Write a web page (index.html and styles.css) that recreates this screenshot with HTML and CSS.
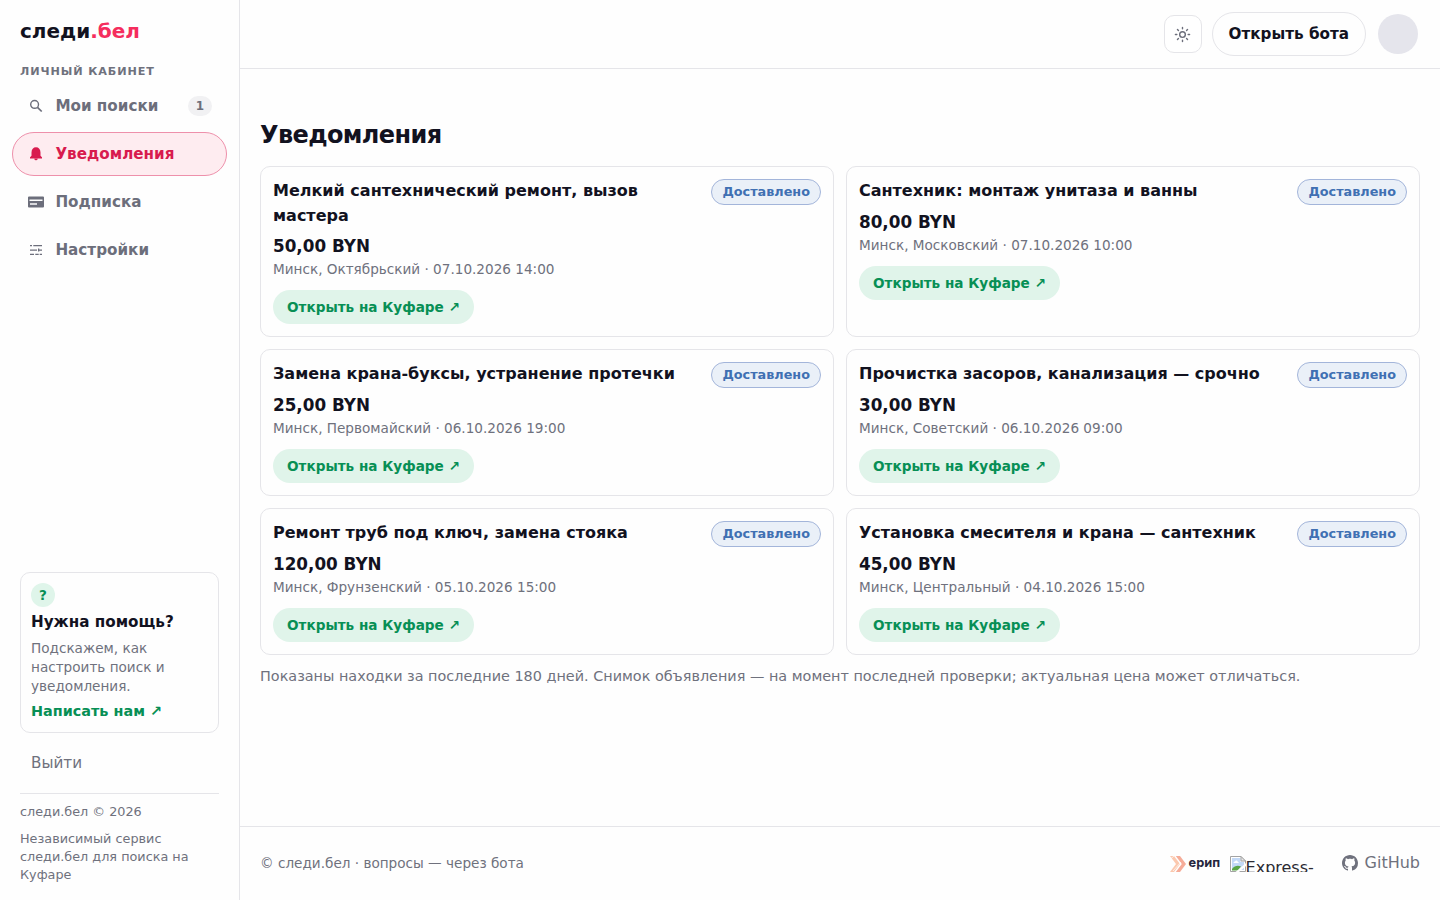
FILE: index.html
```html
<!DOCTYPE html>
<html lang="ru">
<head>
    <meta charset="UTF-8">
    <meta name="viewport" content="width=device-width, initial-scale=1.0">
    <title>Уведомления — следи.бел</title>
    <link rel="stylesheet" href="styles.css">
</head>
<body>
<div class="app">
    <aside class="sidebar">
        <a class="logo">следи<span>.бел</span></a>
        <div class="sidebar-caption">Личный кабинет</div>
        <nav class="nav">
            <a class="nav-item">
                <svg class="nav-icon" viewBox="0 0 16 16" fill="none" stroke="currentColor" stroke-width="1.4"><circle cx="6.600" cy="6.400" r="3.900"/><path stroke-width="1.700" d="M9.500 9.300l4.200 4.200"/></svg>
                <span>Мои поиски</span>
                <span class="nav-count">1</span>
            </a>
            <a class="nav-item active">
                <svg class="nav-icon" viewBox="0 0 16 16" fill="currentColor"><path d="M8 14.300a1.700 1.700 0 0 0 1.700-1.600H6.300A1.700 1.700 0 0 0 8 14.300zM12.500 9.800V6.400C12.500 3.300 10.700 1.300 8 1.300S3.500 3.300 3.500 6.400v3.400L2 11.300v1.200h12v-1.200z"/></svg>
                <span>Уведомления</span>
            </a>
            <a class="nav-item">
                <svg class="nav-icon" viewBox="0 0 16 16" fill="currentColor"><path fill-rule="evenodd" d="M1 2.500h14a1 1 0 0 1 1 1v9a1 1 0 0 1-1 1H1a1 1 0 0 1-1-1v-9a1 1 0 0 1 1-1zM1.500 5.500v1.500h13V5.500zM2 9.300v1.500h7V9.300z"/></svg>
                <span>Подписка</span>
            </a>
            <a class="nav-item">
                <svg class="nav-icon" viewBox="0 0 16 16" fill="currentColor"><path d="M2 3h2v1.300H2zM5.300 3H14v1.300H5.300zM2 7.400h7v1.300H2zM10 6.500h1.300v.9H14v1.300h-2.700v.9H10zM2 11.700h4v1.300H2zM7.300 11.700h3.400v1.300H7.300zM11.700 11.700H14v1.300h-2.300z"/></svg>
                <span>Настройки</span>
            </a>
        </nav>

        <div class="sidebar-bottom">
            <div class="help">
                <span class="help-mark">?</span>
                <div class="help-title">Нужна помощь?</div>
                <p class="help-text">Подскажем, как настроить поиск и уведомления.</p>
                <a class="help-link">Написать нам ↗</a>
            </div>
            <a class="logout">Выйти</a>
            <div class="legal">
                <p>следи.бел © 2026</p>
                <p>Независимый сервис следи.бел для поиска на Куфаре</p>
            </div>
        </div>
    </aside>

    <div class="content">
        <header class="topbar">
            <button class="theme-button" type="button" aria-label="Тема">
                <svg viewBox="0 0 24 24" fill="none" stroke="currentColor" stroke-width="2" stroke-linecap="round"><circle cx="12" cy="12" r="4"/><path d="M12 2v2M12 20v2M4.900 4.900l1.400 1.400M17.700 17.700l1.400 1.400M2 12h2M20 12h2M4.900 19.100l1.400-1.400M17.700 6.300l1.400-1.400"/></svg>
            </button>
            <a class="bot-button">Открыть бота</a>
            <span class="avatar"></span>
        </header>

        <main class="main">
            <h1>Уведомления</h1>
            <div class="cards">
                <article class="card">
                    <div class="card-head"><h2>Мелкий сантехнический ремонт, вызов мастера</h2><span class="badge">Доставлено</span></div>
                    <div class="price">50,00 BYN</div>
                    <div class="meta">Минск, Октябрьский · 07.10.2026 14:00</div>
                    <a class="open-link">Открыть на Куфаре ↗</a>
                </article>
                <article class="card">
                    <div class="card-head"><h2>Сантехник: монтаж унитаза и ванны</h2><span class="badge">Доставлено</span></div>
                    <div class="price">80,00 BYN</div>
                    <div class="meta">Минск, Московский · 07.10.2026 10:00</div>
                    <a class="open-link">Открыть на Куфаре ↗</a>
                </article>
                <article class="card">
                    <div class="card-head"><h2>Замена крана-буксы, устранение протечки</h2><span class="badge">Доставлено</span></div>
                    <div class="price">25,00 BYN</div>
                    <div class="meta">Минск, Первомайский · 06.10.2026 19:00</div>
                    <a class="open-link">Открыть на Куфаре ↗</a>
                </article>
                <article class="card">
                    <div class="card-head"><h2>Прочистка засоров, канализация — срочно</h2><span class="badge">Доставлено</span></div>
                    <div class="price">30,00 BYN</div>
                    <div class="meta">Минск, Советский · 06.10.2026 09:00</div>
                    <a class="open-link">Открыть на Куфаре ↗</a>
                </article>
                <article class="card">
                    <div class="card-head"><h2>Ремонт труб под ключ, замена стояка</h2><span class="badge">Доставлено</span></div>
                    <div class="price">120,00 BYN</div>
                    <div class="meta">Минск, Фрунзенский · 05.10.2026 15:00</div>
                    <a class="open-link">Открыть на Куфаре ↗</a>
                </article>
                <article class="card">
                    <div class="card-head"><h2>Установка смесителя и крана — сантехник</h2><span class="badge">Доставлено</span></div>
                    <div class="price">45,00 BYN</div>
                    <div class="meta">Минск, Центральный · 04.10.2026 15:00</div>
                    <a class="open-link">Открыть на Куфаре ↗</a>
                </article>
            </div>
            <p class="note">Показаны находки за последние 180 дней. Снимок объявления — на момент последней проверки; актуальная цена может отличаться.</p>
        </main>

        <footer class="footer">
            <span class="footer-text">© следи.бел · вопросы — через бота</span>
            <span class="erip">
                <svg viewBox="0 0 17 16"><path fill="#fbc8ae" d="M0 0h4l6 8-6 8H0l6-8z"/><path fill="#f6ac98" d="M5.800 0h4.200l6 8-6 8H5.800l6-8z"/><path stroke="#fefefe" stroke-width=".7" d="M0 3.500 4 0M3 15l8-9"/></svg>
                <span>ерип</span>
            </span>
            <span class="express">
                <svg viewBox="0 0 16 16"><path fill="#fff" stroke="#a3a3a3" d="M.500.500h10.500l4.500 4.500v10.500H.500z"/><path fill="#c3d9f7" d="M2 2h8.500v4H14v8H2z"/><path fill="#fff" d="M3.500 7c0-1.200 1-1.500 1.500-1.500.5-1.300 2.500-1.200 2.700.3 1.200 0 1.200 1.200.8 1.200z"/><path fill="#5aa646" d="M2 14.500V13c2.500-3 5.500-4 9-2.500l-3 4z"/><path fill="#fefefe" d="M16 7v3l-7 6H5.500z"/><path fill="#e8e8e8" stroke="#a3a3a3" d="M11 .500V5h4.500z"/></svg>
                <span>Express-Pay</span>
            </span>
            <a class="github">
                <svg viewBox="0 0 16 16" fill="currentColor"><path d="M8 0C3.580 0 0 3.580 0 8c0 3.540 2.290 6.530 5.470 7.590.4.070.55-.17.55-.38 0-.19-.01-.82-.01-1.490-2.010.37-2.530-.49-2.690-.94-.09-.23-.48-.94-.82-1.130-.28-.15-.68-.52-.01-.53.63-.01 1.080.58 1.230.82.72 1.210 1.870.87 2.330.66.07-.52.28-.87.51-1.070-1.780-.2-3.640-.89-3.640-3.950 0-.87.31-1.590.82-2.150-.08-.2-.36-1.020.08-2.120 0 0 .67-.21 2.200.82.64-.18 1.320-.27 2-.27s1.360.09 2 .27c1.530-1.040 2.200-.82 2.200-.82.44 1.100.16 1.920.08 2.120.51.56.82 1.270.82 2.150 0 3.070-1.870 3.750-3.650 3.950.29.25.54.73.54 1.480 0 1.070-.01 1.930-.01 2.200 0 .21.15.46.55.38A8.010 8.010 0 0 0 16 8c0-4.420-3.580-8-8-8z"/></svg>
                <span>GitHub</span>
            </a>
        </footer>
    </div>
</div>
</body>
</html>
```
FILE: styles.css
```css
* {
    box-sizing: border-box;
}

body {
    margin: 0;
    font-family: "DejaVu Sans", sans-serif;
    font-size: 16px;
    line-height: 1.55;
    color: #12121f;
    background: #fefefe;
}

h1, h2, p {
    margin: 0;
}

.app {
    display: flex;
    height: 100vh;
}

/* sidebar */
.sidebar {
    display: flex;
    flex-direction: column;
    flex: none;
    width: 240px;
    padding: 16px 12px 16px;
    border-right: 1px solid #e5e5e9;
}

.logo {
    padding: 0 8px;
    font-size: 20px;
    line-height: 31px;
    font-weight: bold;
}

.logo span {
    color: #f52d5d;
}

.sidebar-caption {
    padding: 0 8px;
    margin-top: 16px;
    font-size: 11.2px;
    line-height: 17px;
    font-weight: bold;
    letter-spacing: 0.9px;
    text-transform: uppercase;
    color: #6f717d;
}

.nav {
    display: flex;
    flex-direction: column;
    gap: 4px;
    margin-top: 4px;
}

.nav-item {
    display: flex;
    align-items: center;
    gap: 11.4px;
    height: 44px;
    padding: 0 14px 0 15px;
    border: 1px solid transparent;
    border-radius: 22px;
    font-size: 15.2px;
    line-height: 25px;
    font-weight: bold;
    color: #6c6e7b;
}

.nav-item.active {
    color: #d81b4e;
    background: #feecf0;
    border-color: #ee90ab;
}

.nav-icon {
    width: 16px;
    height: 16px;
}

.nav-count {
    margin-left: auto;
    padding: 0 8px;
    border-radius: 10px;
    font-size: 12px;
    line-height: 20px;
    background: #f1f1f3;
}

.sidebar-bottom {
    margin-top: auto;
    padding: 0 8px;
}

.help {
    height: 161px;
    padding: 10px;
    border: 1px solid #e5e5e9;
    border-radius: 10px;
}

.help-mark {
    display: block;
    width: 24px;
    height: 24px;
    border-radius: 50%;
    font-size: 13.6px;
    line-height: 24px;
    font-weight: bold;
    text-align: center;
    color: #078f55;
    background: #dff5ea;
}

.help-title {
    margin-top: 3px;
    font-size: 15.2px;
    line-height: 24px;
    font-weight: bold;
}

.help-text {
    margin-top: 5px;
    font-size: 13.6px;
    line-height: 19px;
    color: #6f717d;
}

.help-link {
    display: block;
    margin-top: 4px;
    font-size: 14.4px;
    line-height: 22px;
    font-weight: bold;
    color: #078f55;
}

.logout {
    display: block;
    height: 60px;
    padding: 0 11px;
    font-size: 15.2px;
    line-height: 60px;
    color: #6f717d;
}

.legal {
    display: flex;
    flex-direction: column;
    gap: 9px;
    padding-top: 9px;
    border-top: 1px solid #e5e5e9;
    font-size: 12.8px;
    line-height: 18px;
    color: #6f717d;
}

/* content */
.content {
    display: flex;
    flex-direction: column;
    flex: 1;
    min-width: 0;
}

.topbar {
    display: flex;
    align-items: center;
    justify-content: flex-end;
    height: 69px;
    padding: 0 22px 0 20px;
    border-bottom: 1px solid #e5e5e9;
}

.theme-button {
    display: flex;
    align-items: center;
    justify-content: center;
    width: 38px;
    height: 38px;
    margin-right: 10px;
    padding: 1px 1px 0 0;
    border: 1px solid #e5e5e9;
    border-radius: 10px;
    color: #6c6e7b;
    background: #fff;
}

.theme-button svg {
    width: 17px;
    height: 17px;
}

.bot-button {
    height: 44px;
    margin-right: 12px;
    padding: 0 16px;
    border: 1px solid #e5e5e9;
    border-radius: 22px;
    font-size: 15.2px;
    line-height: 42px;
    font-weight: bold;
}

.avatar {
    width: 40px;
    height: 40px;
    border-radius: 50%;
    background: #e5e5ec;
}

.main {
    flex: 1;
    padding: 50px 20px 0;
}

h1 {
    margin-bottom: 14px;
    font-size: 24px;
    line-height: 33px;
    letter-spacing: -0.6px;
}

.cards {
    display: grid;
    grid-template-columns: 1fr 1fr;
    gap: 12px;
}

.card {
    padding: 12px;
    border: 1px solid #e5e5e9;
    border-radius: 10px;
}

.card-head {
    display: flex;
    align-items: flex-start;
    justify-content: space-between;
    gap: 12px;
    margin-bottom: 4px;
}

.card h2 {
    font-size: 16px;
    line-height: 24.8px;
}

.badge {
    flex: none;
    height: 26px;
    padding: 0 10px;
    border: 1px solid #a3b5da;
    border-radius: 13px;
    font-size: 12.8px;
    line-height: 24px;
    font-weight: bold;
    color: #4070b3;
    background: #eaf0f8;
}

.price {
    font-size: 16.8px;
    line-height: 26px;
    font-weight: bold;
}

.meta {
    font-size: 13.6px;
    line-height: 21px;
    color: #6f717d;
}

.open-link {
    display: inline-block;
    height: 34px;
    margin-top: 10px;
    padding: 0 14px;
    border-radius: 17px;
    font-size: 13.6px;
    line-height: 34px;
    font-weight: bold;
    color: #078f55;
    background: #e0f4ea;
    vertical-align: top;
}

.note {
    margin-top: 10px;
    font-size: 14.4px;
    line-height: 22px;
    color: #6f717d;
}

.footer {
    display: flex;
    align-items: center;
    height: 74px;
    padding: 0 20px;
    border-top: 1px solid #e5e5e9;
    color: #6f717d;
}

.footer-text {
    margin-right: auto;
    font-size: 13.6px;
}

.erip {
    display: flex;
    gap: 2px;
    width: 50px;
    height: 16px;
    margin-right: 10px;
    font-family: Inter, sans-serif;
    font-size: 12.8px;
    line-height: 14px;
    font-weight: 700;
    color: #25253c;
}

.erip svg {
    flex: none;
    width: 17px;
    height: 16px;
}

/* logo slot without its image: icon and clipped alt text */
.express {
    display: flex;
    width: 92px;
    height: 16px;
    margin-right: 20px;
    overflow: hidden;
    color: #2b2b33;
}

.express svg {
    flex: none;
    width: 16px;
    height: 16px;
}

.express span {
    width: 70px;
    line-height: 24px;
    overflow: hidden;
}

.github {
    display: flex;
    align-items: center;
    gap: 7px;
}

.github svg {
    width: 16px;
    height: 16px;
}
```
